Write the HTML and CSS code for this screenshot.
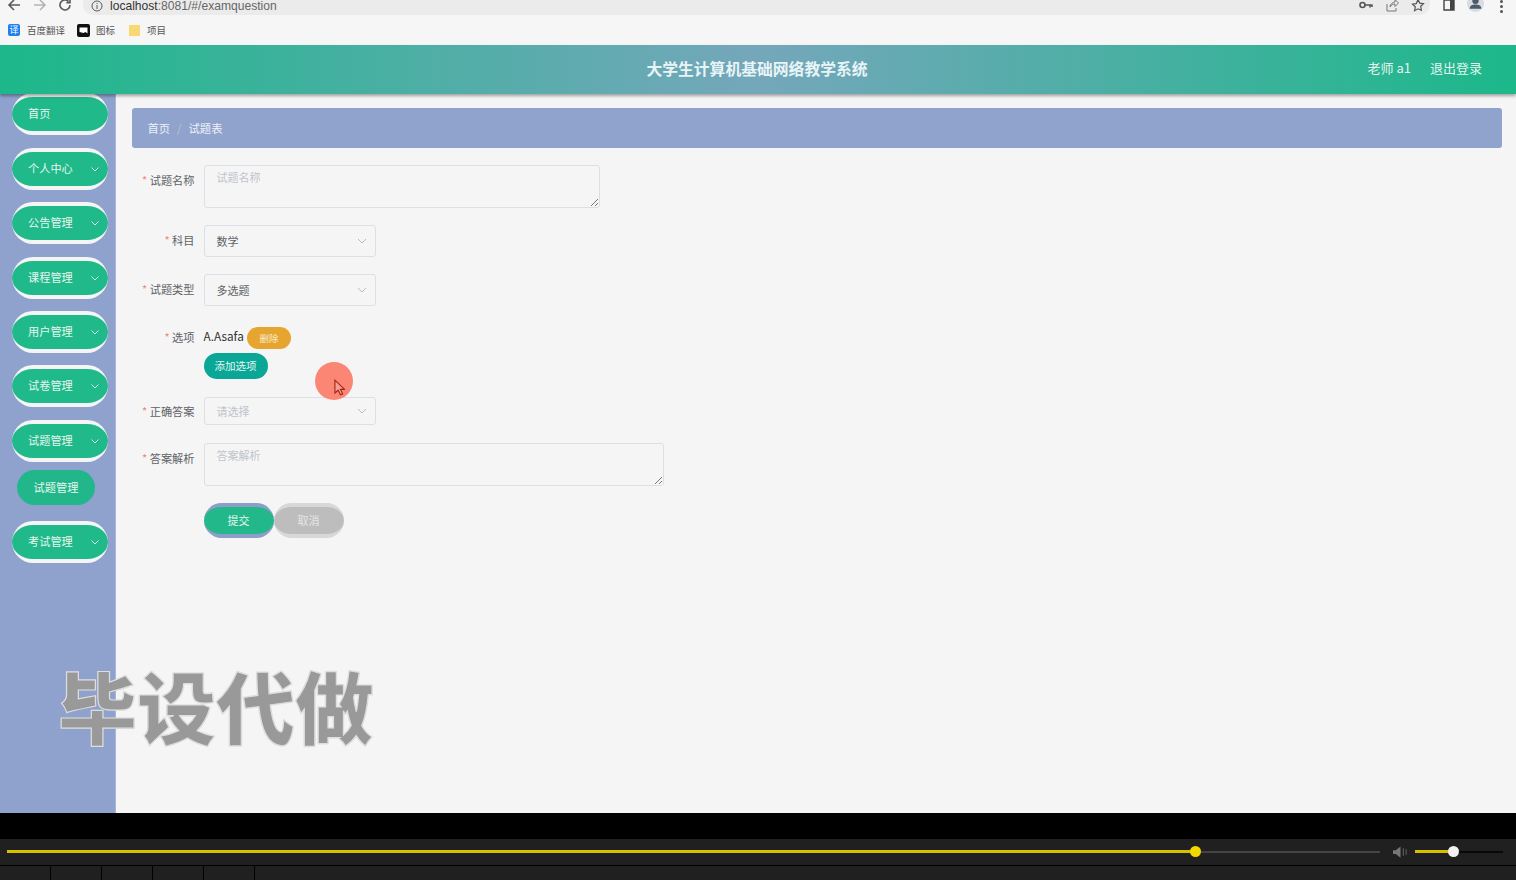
FILE: index.html
```html
<!DOCTYPE html>
<html>
<head>
<title>大学生计算机基础网络教学系统</title>
<meta charset="utf-8">
<link rel="stylesheet" href="styles.css">
</head>
<body>
<div class="screen">
  <div class="chrome">
    <div class="toolbar">
      <svg class="nav_icon" viewBox="0 0 14 14"><path d="M13 7H2M7 2 2 7l5 5" fill="none" stroke="#5a5a5a" stroke-width="1.6"/></svg>
      <svg class="nav_icon" viewBox="0 0 14 14"><path d="M1 7h11M7 2l5 5-5 5" fill="none" stroke="#b4b4b4" stroke-width="1.6"/></svg>
      <svg class="nav_icon" viewBox="0 0 14 14"><path d="M12 7a5 5 0 1 1-1.5-3.6M12 1v3.6H8.400" fill="none" stroke="#5a5a5a" stroke-width="1.6"/></svg>
      <div class="urlbar">
        <svg class="info_icon" viewBox="0 0 12 12"><circle cx="6" cy="6" r="5" fill="none" stroke="#5a5a5a"/><path d="M6 5v4M6 3v1" stroke="#5a5a5a"/></svg>
        <span class="url">localhost<span class="url_dim">:8081/#/examquestion</span></span>
        <span class="url_icons">
          <svg viewBox="0 0 14 14"><circle cx="3.500" cy="7" r="2.500" fill="none" stroke="#555" stroke-width="1.600"/><path d="M6 7h7.500M11 7v2.500M13 7v2" stroke="#555" stroke-width="1.600" fill="none"/></svg>
          <svg viewBox="0 0 14 14"><path d="M2 6v7h9V10M5 9c0-3 3-5 5-5V1.500L13.500 5 10 8.500V6C8 6 6 7 5 9z" fill="none" stroke="#777"/></svg>
          <svg viewBox="0 0 14 14"><path d="m7 1.500 1.700 3.600 3.800.5-2.800 2.700.7 3.900L7 10.800l-3.400 1.900.7-3.900-2.800-2.700 3.800-.5z" fill="none" stroke="#555" stroke-width="1.200"/></svg>
        </span>
      </div>
      <svg class="side_icon" viewBox="0 0 12 12"><path d="M1 1h10v10H1z" fill="none" stroke="#444" stroke-width="1.400"/><path d="M7 1h4v10H7z" fill="#444"/></svg>
      <span class="avatar"><svg viewBox="0 0 16 16"><circle cx="8" cy="5.500" r="3" fill="#4d5a6b"/><path d="M2.500 13c0-3 2.500-4 5.500-4s5.500 1 5.500 4z" fill="#4d5a6b"/></svg></span>
      <span class="dots"><i></i><i></i><i></i></span>
    </div>
    <div class="bookmarks">
      <span class="mark"><span class="mark_fanyi">译</span>百度翻译</span>
      <span class="mark mark_wide"><svg class="mark_icon" viewBox="0 0 13 13"><rect width="13" height="13" rx="2" fill="#111"/><path d="M2.500 3.500h8v6l-2-1.500-2 1-4-1z" fill="#fff"/></svg>图标</span>
      <span class="mark"><svg class="mark_icon" viewBox="0 0 13 13"><path d="M1 1h11v11H1z" fill="#f8d775"/></svg><span class="mark_gap">项目</span></span>
    </div>
  </div>

  <div class="app">
    <header class="topbar">
      <div class="title">大学生计算机基础网络教学系统</div>
      <div class="user">老师 a1</div>
      <div class="logout">退出登录</div>
    </header>
    <div class="body_row">
      <aside class="sidebar">
        <div class="menu_item">首页</div>
        <div class="menu_item">个人中心<svg class="arrow" viewBox="0 0 10 10"><path d="m1.500 3.500 3.500 3.500 3.500-3.500"/></svg></div>
        <div class="menu_item">公告管理<svg class="arrow" viewBox="0 0 10 10"><path d="m1.500 3.500 3.500 3.500 3.500-3.500"/></svg></div>
        <div class="menu_item">课程管理<svg class="arrow" viewBox="0 0 10 10"><path d="m1.500 3.500 3.500 3.500 3.500-3.500"/></svg></div>
        <div class="menu_item">用户管理<svg class="arrow" viewBox="0 0 10 10"><path d="m1.500 3.500 3.500 3.500 3.500-3.500"/></svg></div>
        <div class="menu_item">试卷管理<svg class="arrow" viewBox="0 0 10 10"><path d="m1.500 3.500 3.500 3.500 3.500-3.500"/></svg></div>
        <div class="menu_item menu_open">试题管理<svg class="arrow" viewBox="0 0 10 10"><path d="m1.500 3.500 3.500 3.500 3.500-3.500"/></svg></div>
        <div class="sub_item">试题管理</div>
        <div class="menu_item">考试管理<svg class="arrow" viewBox="0 0 10 10"><path d="m1.500 3.500 3.500 3.500 3.500-3.500"/></svg></div>
      </aside>
      <main class="content">
        <div class="crumbs"><b>首页</b><i>/</i><span>试题表</span></div>
        <form class="exam_form">
          <div class="row row_area">
            <label><em>*</em> 试题名称</label>
            <div class="area area_short">试题名称<svg class="grip" viewBox="0 0 8 8"><path d="M8 1 1 8M8 5 5 8"/></svg></div>
          </div>
          <div class="row">
            <label><em>*</em> 科目</label>
            <div class="select">数学<svg class="caret" viewBox="0 0 10 10"><path d="m1 3 4 4 4-4"/></svg></div>
          </div>
          <div class="row">
            <label><em>*</em> 试题类型</label>
            <div class="select">多选题<svg class="caret" viewBox="0 0 10 10"><path d="m1 3 4 4 4-4"/></svg></div>
          </div>
          <div class="row row_opts">
            <label><em>*</em> 选项</label>
            <div class="opts">
              <div class="opt_line"><span class="opt_text">A.Asafa</span><span class="btn_del">删除</span></div>
              <span class="btn_add">添加选项</span>
            </div>
          </div>
          <div class="row row_short">
            <label><em>*</em> 正确答案</label>
            <div class="select select_empty">请选择<svg class="caret" viewBox="0 0 10 10"><path d="m1 3 4 4 4-4"/></svg></div>
          </div>
          <div class="row row_area">
            <label><em>*</em> 答案解析</label>
            <div class="area area_long">答案解析<svg class="grip" viewBox="0 0 8 8"><path d="M8 1 1 8M8 5 5 8"/></svg></div>
          </div>
          <div class="actions">
            <span class="btn_submit">提交</span>
            <span class="btn_cancel">取消</span>
          </div>
        </form>
      </main>
    </div>
  </div>

  <div class="player">
    <div class="player_gap"></div>
    <div class="player_bar">
      <div class="track"><div class="track_done"><span class="knob"></span></div></div>
      <svg class="speaker" viewBox="0 0 16 12"><path d="M0 4h3l5-4v12L3 8H0z" fill="#777"/><path d="M11 2v8M14 3v6" stroke="#666"/></svg>
      <div class="volume"><div class="volume_done"><span class="volume_knob"></span></div></div>
    </div>
    <div class="player_cells">
      <span></span><span></span><span></span><span></span><span></span>
    </div>
  </div>

  <div class="click_mark">
    <svg viewBox="0 0 12 18"><path d="M1 1v14l3.500-3 2.500 5 2.500-1-2.500-5h4.500z" fill="#f8a08f" stroke="#a4231a" stroke-width="1.200"/></svg>
  </div>
  <div class="stamp">毕设代做</div>
</div>
</body>
</html>
```

FILE: styles.css
```css
*{box-sizing: border-box;}
html,body{margin: 0;padding: 0;}
body{font-family: "Noto Sans CJK SC", "Liberation Sans", sans-serif;overflow: hidden;}
svg{display: block;}
.screen{position: relative;width: 1516px;height: 880px;overflow: hidden;background: #f5f5f5;}

/* browser bar */
.chrome{height: 45px;background: #f6f6f6;}
.toolbar{display: flex;align-items: flex-start;height: 22px;}
.nav_icon{width: 14px;height: 14px;margin: -2px 0 0 7px;flex: none;margin-right: 4px;}
.nav_icon + .nav_icon{margin-left: 8px;}
.nav_icon + .nav_icon + .nav_icon{margin-left: 7px;}
.urlbar{flex: none;display: flex;align-items: center;width: 1347px;height: 15px;margin-left: 7px;padding: 0 0 3px 8px;background: #ebebeb;border-radius: 0 0 10px 10px;}
.info_icon{width: 12px;height: 12px;margin-top: -1px;}
.url{margin-left: 7px;font: 12.100px/12px "Liberation Sans", sans-serif;color: #333;}
.url_dim{color: #666;}
.url_icons{display: flex;gap: 12px;margin-left: auto;margin-right: 5px;}
.url_icons svg{width: 14px;height: 14px;margin-top: -2px;}
.side_icon{width: 12px;height: 12px;margin: -1px 0 0 13px;flex: none;}
.avatar{width: 17px;height: 17px;margin: -5px 0 0 12px;border-radius: 50%;background: #d8dbe0;flex: none;}
.dots{display: flex;flex-direction: column;gap: 2px;margin: 0 0 0 16px;}
.dots i{display: block;width: 3px;height: 3px;border-radius: 50%;background: #555;}
.bookmarks{display: flex;align-items: center;height: 16px;padding-left: 8px;font-size: 9.500px;color: #555;}
.mark{display: flex;align-items: center;margin-right: 12px;}
.mark_wide{margin-right: 13px;}
.mark_fanyi{width: 12px;height: 12px;margin-right: 7px;border-radius: 2px;background: #2080f0;color: #fff;font-size: 9px;line-height: 12px;text-align: center;}
.mark_icon{width: 13px;height: 13px;margin-right: 6px;}
.mark_gap{margin-left: 0;}

/* app */
.app{height: 768px;display: flex;flex-direction: column;}
.topbar{position: relative;z-index: 2;flex: none;height: 49px;display: flex;align-items: center;padding: 0 34px 2px 0;color: #fff;background: linear-gradient(90deg, #1cb88a 0%, #75a7bb 50%, #1cb88a 100%);box-shadow: 0 2px 3px rgba(0,0,0,.35);}
.title{position: absolute;left: 0;width: 100%;padding-right: 2px;text-align: center;font-size: 15.800px;font-weight: 700;color: #e8f4f6;}
.user{margin: 0 0 2px auto;font-size: 13px;color: #e4f4ef;}
.logout{margin: 0 0 2px 19px;font-size: 13px;color: #e4f4ef;}
.body_row{flex: 1;display: flex;min-height: 0;}

/* left menu */
.sidebar{flex: none;width: 116px;padding: 0 0 0 12px;background: #8fa2cd;border-right: 1px solid #a9b6d6;}
.menu_item{position: relative;width: 96px;height: 42px;margin-bottom: 12.400px;padding-left: 16px;border-radius: 21px;border-top: 4px solid #f5f5f5;border-bottom: 4px solid #f5f5f5;background: #1fb98a;color: #e8f5f0;font-size: 11.200px;line-height: 33px;}
.menu_item:first-child{margin-top: -.6px;}
.menu_open{margin-bottom: 8px;}
.arrow{position: absolute;top: 12px;right: 8px;width: 10px;height: 10px;fill: none;stroke: #d4efe6;stroke-width: 1;}
.sub_item{width: 78px;height: 35px;margin: 0 0 16px 5px;border-radius: 18px;background: #22b78a;color: #e8f5f0;font-size: 11.200px;line-height: 35px;text-align: center;}

/* form area */
.content{flex: 1;padding: 14px 14px 0 15.500px;background: #f5f5f5;min-width: 0;}
.crumbs{display: flex;align-items: center;height: 40px;padding: 0 0 1px 16px;background: #90a3cc;border-radius: 3px;font-size: 11.300px;color: #eef1f8;}
.crumbs b{font-weight: 400;}
.crumbs i{margin: 0 7px;font-style: normal;color: #b6c2de;}
.exam_form{padding-top: 17px;margin-left: -1px;}
.row{display: flex;margin-bottom: 17px;}
.row label{flex: none;width: 64px;margin-right: 9px;text-align: right;font-size: 11.200px;line-height: 31px;color: #606266;white-space: nowrap;}
.row label em{font-style: normal;color: #f08a7a;}
.row_area label{line-height: 30px;}
.area{position: relative;height: 43px;padding: 3px 12px;border: 1px solid #dcdfe6;border-radius: 3px;font-size: 11px;line-height: 17px;color: #c0c4cc;}
.area_short{width: 396.500px;}
.area_long{width: 460px;}
.grip{position: absolute;right: 1px;bottom: 1px;width: 8px;height: 8px;fill: none;stroke: #777;stroke-width: 1;}
.select{position: relative;width: 172.500px;height: 32px;padding-left: 12px;border: 1px solid #dcdfe6;border-radius: 3px;font-size: 11px;line-height: 31px;color: #606266;}
.select_empty{height: 28px;line-height: 27px;color: #c0c4cc;}
.caret{position: absolute;top: 50%;right: 8px;width: 10px;height: 10px;margin-top: -5px;fill: none;stroke: #b8bcc4;stroke-width: 1;}
.row_opts{margin-bottom: 18px;padding-top: 4px;}
.row_opts label{line-height: 20px;}
.row_short{margin-bottom: 18px;}
.row_short label{line-height: 28px;}
.opts{display: flex;flex-direction: column;align-items: flex-start;}
.opt_line{display: flex;align-items: center;height: 22px;margin-bottom: 4px;}
.opt_text{font-size: 11.800px;line-height: 18px;margin: 0 3px 4px 0;color: #333;}
.btn_del{width: 44.500px;height: 22px;border-radius: 11px;background: #e6a52f;color: #f9ecd0;font-size: 9.500px;line-height: 22px;text-align: center;}
.btn_add{width: 64px;height: 26px;border-radius: 13px;background: #0aa797;color: #e4f6f3;font-size: 10.500px;line-height: 25px;text-align: center;}
.actions{display: flex;padding-left: 73px;}
.btn_submit,.btn_cancel{width: 70px;height: 35px;border-radius: 18px;font-size: 11px;line-height: 27px;text-align: center;}
.btn_submit{background: #22b88a;border-top: 4px solid #8b9fc9;border-bottom: 4px solid #8b9fc9;color: #e8f5f0;}
.btn_cancel{background: #bdbdbd;border-top: 4px solid #d8d8d8;border-bottom: 4px solid #d8d8d8;color: #e6e6e6;}

/* player strip */
.player{height: 67px;background: #000;}
.player_gap{height: 26px;}
.player_bar{display: flex;align-items: center;height: 26px;padding-left: 7px;background: #202020;}
.track{width: 1373px;height: 2px;background: #444;}
.track_done{position: relative;width: 1189px;height: 3px;margin-top: -1px;background: #d8c000;}
.knob{position: absolute;top: -4px;right: -5px;width: 11px;height: 11px;border-radius: 50%;background: #f2d900;}
.speaker{width: 15px;height: 12px;margin-left: 13px;flex: none;}
.volume{width: 88px;height: 2px;margin-left: 7px;background: #080808;}
.volume_done{position: relative;width: 39px;height: 3px;margin-top: -1px;background: #d8c000;}
.volume_knob{position: absolute;top: -4px;right: -5px;width: 11px;height: 11px;border-radius: 50%;background: #f2f2f2;}
.player_cells{display: flex;height: 15px;margin-top: 1px;background: #202020;}
.player_cells span{width: 51px;height: 15px;border-right: 1px solid #000;}

/* overlays: click marker and video watermark */
.click_mark{position: absolute;left: 315px;top: 362px;width: 38px;height: 38px;border-radius: 50%;background: #fb8674;}
.click_mark svg{position: absolute;left: 19px;top: 17px;width: 11px;height: 17px;}
.stamp{position: absolute;left: 58px;top: 650px;font-size: 79px;line-height: 110px;font-weight: 900;color: #999;-webkit-text-stroke: 1.200px #dedede;text-shadow: 0 0 1px #8a8a8a;white-space: nowrap;}
```
